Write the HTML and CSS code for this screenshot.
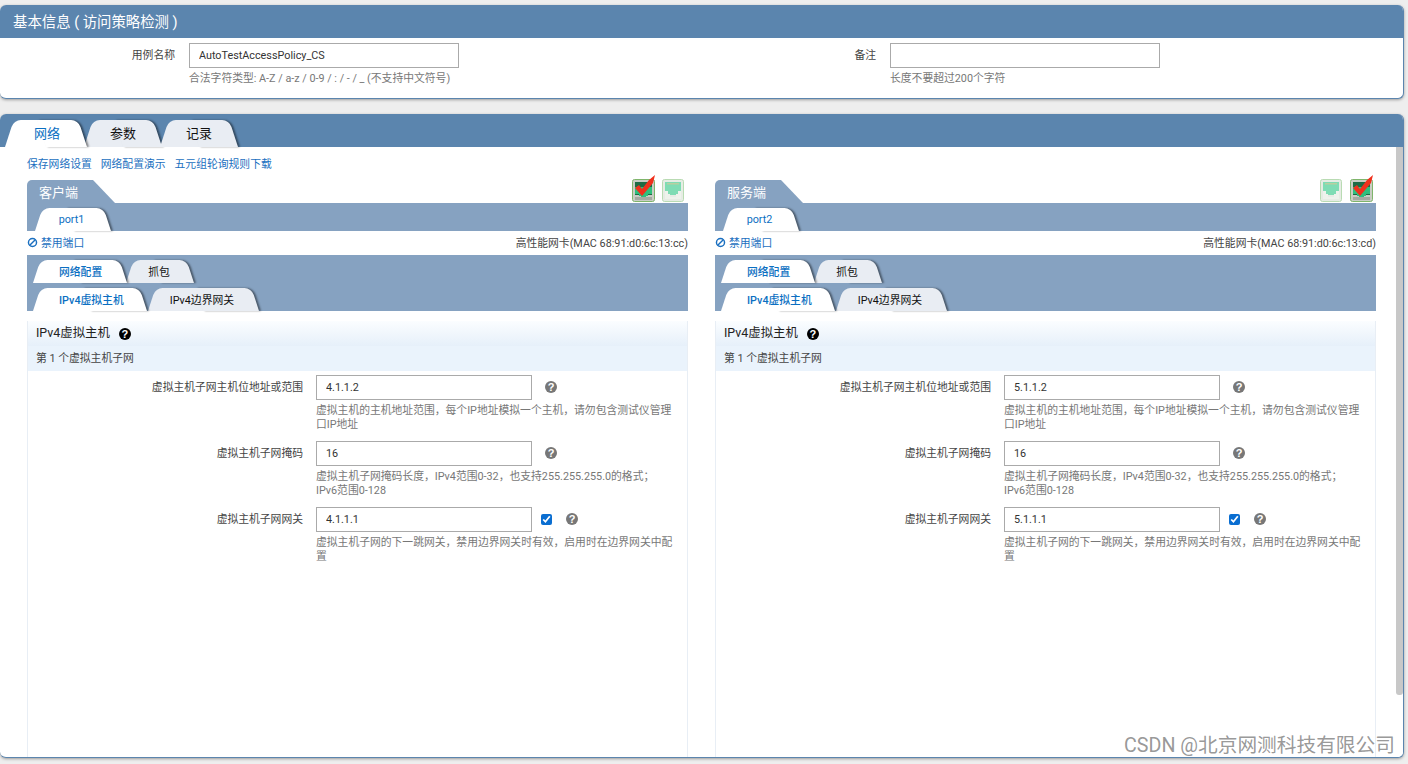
FILE: index.html
```html
<!Doctype html>
<html lang="en">
<head>
	<meta charset="utf-8">
	<title>访问策略检测</title>
	<link rel="stylesheet" href="styles.css">
</head>
<body>

	<section class="panel info">
		<h1 class="panel_title">基本信息 ( 访问策略检测 )</h1>
		<div class="info_form">
			<div class="info_field">
				<label>用例名称</label>
				<div>
					<input class="text info_input" type="text" value="AutoTestAccessPolicy_CS">
					<p class="hint">合法字符类型: A-Z / a-z / 0-9 / : / - / _ (不支持中文符号)</p>
				</div>
			</div>
			<div class="info_field">
				<label>备注</label>
				<div>
					<input class="text info_input" type="text">
					<p class="hint">长度不要超过200个字符</p>
				</div>
			</div>
		</div>
	</section>

	<section class="panel main">
		<div class="tabs main_tabs">
			<a class="tab active">网络</a>
			<a class="tab">参数</a>
			<a class="tab">记录</a>
		</div>

		<div class="main_body">
			<div class="main_content">
				<div class="links">
					<a>保存网络设置</a>
					<a>网络配置演示</a>
					<a>五元组轮询规则下载</a>
				</div>

				<div class="columns">
					<div class="side">
						<div class="side_head">
							<div class="side_name">客户端</div>
							<div class="nics">
								<svg class="nic" viewBox="0 0 24 28"><use href="#nic_on"></use></svg>
								<svg class="nic" viewBox="0 0 24 28"><use href="#nic_off"></use></svg>
							</div>
						</div>
						<div class="tabs port_tabs"><a class="tab active">port1</a></div>
						<div class="port_row">
							<a class="ban"><svg viewBox="0 0 12 12"><use href="#ban"></use></svg>禁用端口</a>
							<span>高性能网卡(MAC 68:91:d0:6c:13:cc)</span>
						</div>
						<div class="sub_bar">
							<div class="tabs sub_tabs">
								<a class="tab active">网络配置</a>
								<a class="tab">抓包</a>
							</div>
							<div class="tabs sub_tabs">
								<a class="tab active">IPv4虚拟主机</a>
								<a class="tab">IPv4边界网关</a>
							</div>
						</div>
						<div class="sheet">
							<h2 class="sheet_title">IPv4虚拟主机 <i class="help dark">?</i></h2>
							<h3 class="sheet_sub">第 1 个虚拟主机子网</h3>
							<div class="row">
								<label>虚拟主机子网主机位地址或范围</label>
								<div class="row_field">
									<input class="text" type="text" value="4.1.1.2">
									<i class="help">?</i>
									<p class="hint">虚拟主机的主机地址范围，每个IP地址模拟一个主机，请勿包含测试仪管理口IP地址</p>
								</div>
							</div>
							<div class="row">
								<label>虚拟主机子网掩码</label>
								<div class="row_field">
									<input class="text" type="text" value="16">
									<i class="help">?</i>
									<p class="hint">虚拟主机子网掩码长度，IPv4范围0-32，也支持255.255.255.0的格式； IPv6范围0-128</p>
								</div>
							</div>
							<div class="row">
								<label>虚拟主机子网网关</label>
								<div class="row_field">
									<input class="text" type="text" value="4.1.1.1">
									<input class="check" type="checkbox" checked>
									<i class="help">?</i>
									<p class="hint">虚拟主机子网的下一跳网关，禁用边界网关时有效，启用时在边界网关中配置</p>
								</div>
							</div>
						</div>
					</div>

					<div class="side">
						<div class="side_head">
							<div class="side_name">服务端</div>
							<div class="nics">
								<svg class="nic" viewBox="0 0 24 28"><use href="#nic_off"></use></svg>
								<svg class="nic" viewBox="0 0 24 28"><use href="#nic_on"></use></svg>
							</div>
						</div>
						<div class="tabs port_tabs"><a class="tab active">port2</a></div>
						<div class="port_row">
							<a class="ban"><svg viewBox="0 0 12 12"><use href="#ban"></use></svg>禁用端口</a>
							<span>高性能网卡(MAC 68:91:d0:6c:13:cd)</span>
						</div>
						<div class="sub_bar">
							<div class="tabs sub_tabs">
								<a class="tab active">网络配置</a>
								<a class="tab">抓包</a>
							</div>
							<div class="tabs sub_tabs">
								<a class="tab active">IPv4虚拟主机</a>
								<a class="tab">IPv4边界网关</a>
							</div>
						</div>
						<div class="sheet">
							<h2 class="sheet_title">IPv4虚拟主机 <i class="help dark">?</i></h2>
							<h3 class="sheet_sub">第 1 个虚拟主机子网</h3>
							<div class="row">
								<label>虚拟主机子网主机位地址或范围</label>
								<div class="row_field">
									<input class="text" type="text" value="5.1.1.2">
									<i class="help">?</i>
									<p class="hint">虚拟主机的主机地址范围，每个IP地址模拟一个主机，请勿包含测试仪管理口IP地址</p>
								</div>
							</div>
							<div class="row">
								<label>虚拟主机子网掩码</label>
								<div class="row_field">
									<input class="text" type="text" value="16">
									<i class="help">?</i>
									<p class="hint">虚拟主机子网掩码长度，IPv4范围0-32，也支持255.255.255.0的格式； IPv6范围0-128</p>
								</div>
							</div>
							<div class="row">
								<label>虚拟主机子网网关</label>
								<div class="row_field">
									<input class="text" type="text" value="5.1.1.1">
									<input class="check" type="checkbox" checked>
									<i class="help">?</i>
									<p class="hint">虚拟主机子网的下一跳网关，禁用边界网关时有效，启用时在边界网关中配置</p>
								</div>
							</div>
						</div>
					</div>
				</div>
			</div>
			<div class="scrollbar"><div class="scroll_thumb"></div></div>
		</div>
	</section>

	<div class="watermark">CSDN @北京网测科技有限公司</div>

	<svg class="defs" width="0" height="0">
		<defs>
			<symbol id="ban" viewBox="0 0 12 12">
				<circle cx="6" cy="6" r="4.4" fill="none" stroke="#1a6fc0" stroke-width="1.6"></circle>
				<path d="M3 9 L9 3" stroke="#1a6fc0" stroke-width="1.6"></path>
			</symbol>
			<symbol id="nic_on" viewBox="0 0 24 28">
				<rect x="0.5" y="4.5" width="22" height="22" rx="2" fill="#c9cdc4" stroke="#7fb56b"></rect>
				<rect x="3" y="7" width="17" height="13" fill="#1f6b45"></rect>
				<path d="M3 12 H20 V19 H16 V21 H14 V23 H9 V21 H7 V19 H3 Z" fill="#2fbf7d"></path>
				<rect x="3" y="22" width="17" height="3" fill="#a5aaa2"></rect>
				<path d="M3 13 L7 10 L10 14 L17 5 L23 0 L21 8 L10 21 Z" fill="#f0301c"></path>
			</symbol>
			<symbol id="nic_off" viewBox="0 0 24 28">
				<rect x="0.5" y="4.5" width="21" height="22" rx="2" fill="#e6ece4" stroke="#b9dbb3"></rect>
				<rect x="3" y="7" width="16" height="13" fill="#7fdcb4"></rect>
				<path d="M3 16 H6 V19 H8 V22 H14 V19 H16 V16 H19 V24 H3 Z" fill="#eef2ec"></path>
				<rect x="5" y="8" width="12" height="1.5" fill="#b8cfa0"></rect>
			</symbol>
		</defs>
	</svg>

</body>
</html>
```

FILE: styles.css
```css
html, body {
	height: 100%;
	margin: 0;
	overflow: hidden;
}

body {
	padding: 5px 4px 0 0;
	box-sizing: border-box;
	background: #eeeeee;
	font-family: Roboto, "Noto Sans CJK SC", sans-serif;
	font-size: 10.8px;
	color: #444444;
}

h1, h2, h3, p {
	margin: 0;
	font-weight: normal;
}

.panel {
	background: #ffffff;
	border-radius: 6px;
	border-bottom: 1px solid #5b85ae;
	border-right: 1px solid #5b85ae;
	box-shadow: 0 1px 3px rgba(0, 0, 0, 0.35);
	overflow: hidden;
}

.panel_title {
	height: 33px;
	padding-left: 13px;
	line-height: 35px;
	font-size: 14.4px;
	color: #ffffff;
	background: #5b85ae;
}

.info {
	height: 93px;
	margin-bottom: 15px;
}

.info_form {
	display: grid;
	grid-template-columns: 701px 1fr;
	padding-top: 5px;
}

.info_field {
	display: grid;
	grid-template-columns: 175px 1fr;
	column-gap: 14px;
}

.info_field label {
	text-align: right;
	line-height: 25px;
}

.text {
	box-sizing: border-box;
	display: inline-block;
	width: 216px;
	height: 25px;
	padding: 0 9px;
	margin: 0;
	border: 1px solid #aaaaaa;
	border-radius: 0;
	outline: none;
	background: #ffffff;
	font: 10.8px Roboto, "Noto Sans CJK SC", sans-serif;
	color: #333333;
	vertical-align: top;
}

.info_input {
	width: 270px;
}

.hint {
	font-size: 10.8px;
	line-height: 14px;
	color: #777777;
}

.info_field .hint {
	margin-top: 4px;
}

.main {
	height: 644px;
	box-sizing: border-box;
	position: relative;
}

.tabs {
	display: flex;
}

.tab {
	position: relative;
	isolation: isolate;
	display: block;
	text-align: center;
	color: #111111;
}

.tab:before, .tab:after {
	content: "";
	position: absolute;
	top: 0;
	bottom: 0;
	z-index: -1;
	background: #e9edf3;
	transform-origin: bottom;
}

.tab:before {
	left: 0;
	right: 50%;
	border-top-left-radius: 7px;
	transform: skewX(-18deg);
}

.tab:after {
	left: 50%;
	right: 0;
	border-top-right-radius: 7px;
	transform: skewX(18deg);
	box-shadow: 2px 0 2px rgba(0, 0, 0, 0.45);
}

.tab.active {
	color: #0b6fc2;
	z-index: 1;
}

.tab.active:before, .tab.active:after {
	background: #ffffff;
}

.main_tabs {
	height: 33px;
	box-sizing: border-box;
	padding: 6px 0 0 5px;
	background: #5b85ae;
}

.main_tabs .tab {
	height: 27px;
	line-height: 27px;
	font-size: 13px;
	padding: 0 26px;
	margin-right: -2px;
}

.main_tabs .tab:first-child {
	padding: 0 26px 0 29px;
}

.main_body {
	display: flex;
	height: 610px;
}

.main_content {
	flex: 1;
	padding: 9px 20px 0 27px;
	overflow: hidden;
}

.scrollbar {
	width: 7px;
	background: #ffffff;
}

.scroll_thumb {
	height: 548px;
	border-radius: 0 0 3px 3px;
	background: #c8c8c8;
}

.links {
	display: flex;
	gap: 9px;
	height: 24px;
	line-height: 18px;
	color: #1a6fc0;
}

.columns {
	display: grid;
	grid-template-columns: 661px 661px;
	column-gap: 27px;
}

.side_head {
	display: flex;
	justify-content: space-between;
	align-items: flex-end;
	height: 23px;
	padding: 0 2px 1px 0;
	box-sizing: border-box;
}

.side_name {
	width: 88px;
	height: 23px;
	margin-bottom: -1px;
	box-sizing: border-box;
	padding-left: 12px;
	line-height: 25px;
	font-size: 13px;
	color: #ffffff;
	background: #86a2c1;
	border-top-left-radius: 5px;
	clip-path: polygon(0 0, 66px 0, 88px 23px, 0 23px);
}

.nics {
	display: flex;
	gap: 6px;
}

.nic {
	display: block;
	width: 24px;
	height: 28px;
	margin-bottom: -1px;
}

.port_tabs {
	height: 28px;
	box-sizing: border-box;
	padding: 5px 0 0 8px;
	background: #86a2c1;
}

.port_tabs .tab {
	width: 75px;
	height: 23px;
	box-sizing: border-box;
	padding-right: 2px;
	line-height: 23px;
}

.port_row {
	display: flex;
	justify-content: space-between;
	align-items: center;
	height: 24px;
	padding-bottom: 2px;
	box-sizing: border-box;
}

.ban {
	display: flex;
	align-items: center;
	gap: 3px;
	color: #1a6fc0;
}

.ban svg {
	width: 11px;
	height: 11px;
}

.sub_bar {
	height: 56px;
	box-sizing: border-box;
	padding: 5px 0 0 6px;
	background: #86a2c1;
}

.sub_tabs {
	height: 23px;
	margin-bottom: 5px;
}

.sub_tabs .tab {
	height: 23px;
	line-height: 25px;
	padding: 0 24px 0 26px;
}

.sub_tabs .tab.active {
	font-weight: 500;
}

.sub_tabs .tab + .tab {
	padding: 0 25px 0 22px;
}

.sheet {
	margin-top: 10px;
	height: 437px;
	border-left: 1px solid #e8eef5;
	border-right: 1px solid #e8eef5;
}

.sheet_title {
	height: 25px;
	padding-left: 8px;
	line-height: 23px;
	font-size: 12.4px;
	color: #222222;
	background: linear-gradient(#fbfdff, #e6f0fa);
}

.sheet_sub {
	height: 25px;
	padding-left: 8px;
	margin-bottom: 4px;
	line-height: 25px;
	font-size: 10.8px;
	color: #444444;
	background: #eaf3fc;
}

.row {
	display: grid;
	grid-template-columns: 275px 360px;
	column-gap: 13px;
	height: 66px;
}

.row label {
	text-align: right;
	line-height: 26px;
}

.row_field {
	display: flex;
	flex-wrap: wrap;
	align-items: flex-start;
	align-content: flex-start;
}

.row_field .hint {
	width: 100%;
	margin-top: 4px;
}

.help {
	display: block;
	width: 12px;
	height: 12px;
	margin: 6px 0 0 13px;
	border-radius: 50%;
	background: #777777;
	color: #ffffff;
	font: bold 11px/12px "Liberation Sans", sans-serif;
	text-align: center;
}

.help.dark {
	display: inline-block;
	margin: 0 0 0 6px;
	background: #000000;
	vertical-align: -1px;
}

.check {
	width: 11px;
	height: 11px;
	margin: 7px 0 0 9px;
	accent-color: #0a6ed1;
}

.check + .help {
	margin-left: 14px;
}

.watermark {
	position: absolute;
	left: 1124px;
	top: 733px;
	font-size: 19.7px;
	line-height: 26px;
	color: rgba(140, 140, 140, 0.9);
	text-shadow: 0 0 1px #ffffff;
}

.defs {
	position: absolute;
}
```
